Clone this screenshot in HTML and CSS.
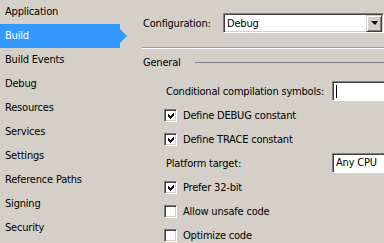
FILE: index.html
```html
<!DOCTYPE html>
<html lang="en">
<head>
<meta charset="UTF-8">
<title>Project Properties</title>
<link rel="stylesheet" href="styles.css">
</head>
<body>

<div class="page">
    <ul class="tabs">
        <li>Application</li>
        <li class="active">Build</li>
        <li>Build Events</li>
        <li>Debug</li>
        <li>Resources</li>
        <li>Services</li>
        <li>Settings</li>
        <li>Reference Paths</li>
        <li>Signing</li>
        <li>Security</li>
    </ul>

    <div class="panel">
        <div class="config">
            <span class="config-label">Configuration:</span>
            <div class="combo">
                <span class="combo-text">Debug</span>
                <span class="combo-btn"><span class="arrow-down"></span></span>
            </div>
        </div>

        <div class="separator"></div>

        <div class="group-title">
            <span>General</span>
            <span class="group-line"></span>
        </div>

        <div class="rows">
            <div class="row field">
                <span class="label">Conditional compilation symbols:</span>
                <div class="textbox"><span class="caret"></span></div>
            </div>
            <div class="row check">
                <span class="box checked"></span>
                <span>Define DEBUG constant</span>
            </div>
            <div class="row check">
                <span class="box checked"></span>
                <span>Define TRACE constant</span>
            </div>
            <div class="row field">
                <span class="label">Platform target:</span>
                <div class="textbox">Any CPU</div>
            </div>
            <div class="row check">
                <span class="box checked"></span>
                <span>Prefer 32-bit</span>
            </div>
            <div class="row check">
                <span class="box"></span>
                <span>Allow unsafe code</span>
            </div>
            <div class="row check">
                <span class="box"></span>
                <span>Optimize code</span>
            </div>
        </div>
    </div>
</div>

</body>
</html>
```

FILE: styles.css
```css
body {
    margin: 0;
    background: #d4d0c8;
    font-family: 'DejaVu Sans Condensed', 'DejaVu Sans', sans-serif;
    font-size: 11px;
    letter-spacing: -0.2px;
    color: #000;
    overflow: hidden;
}
.page {
    display: flex;
    height: 243px;
}
.tabs {
    list-style: none;
    margin: 0;
    padding: 0;
    width: 128px;
    flex-shrink: 0;
}
.tabs li {
    position: relative;
    height: 24px;
    line-height: 24px;
    padding-left: 5px;
    width: 115px;
}
.tabs li.active {
    background: #3399ff;
    color: #fff;
}
.tabs li.active::after {
    content: "";
    position: absolute;
    left: 120px;
    top: 5px;
    border-left: 7px solid #3399ff;
    border-top: 7px solid transparent;
    border-bottom: 7px solid transparent;
}
.panel {
    flex: 1;
    min-width: 0;
}
.config {
    display: flex;
    align-items: center;
    height: 20px;
    margin-top: 13px;
    padding-left: 15px;
}
.config-label {
    width: 80px;
}
.combo {
    display: flex;
    align-items: center;
    width: 154px;
    height: 16px;
    background: #fff;
    border: 1px solid;
    border-color: #808080 #fff #fff #808080;
    box-shadow: inset 1px 1px #404040, inset -1px -1px #d4d0c8;
    padding: 1px 2px 1px 3px;
}
.combo-text {
    flex: 1;
}
.combo-btn {
    display: flex;
    align-items: center;
    justify-content: center;
    background: #d4d0c8;
    border: 1px solid;
    border-color: #d4d0c8 #404040 #404040 #d4d0c8;
    box-shadow: inset 1px 1px #fff, inset -1px -1px #808080;
    box-sizing: border-box;
    width: 16px;
    height: 17px;
    margin-right: -1px;
}
.arrow-down {
    border-top: 4px solid #000;
    border-left: 4px solid transparent;
    border-right: 3px solid transparent;
}
.separator {
    margin: 14px 0 0 14px;
    border-top: 1px solid #a0a0a0;
    border-bottom: 1px solid #fff;
}
.group-title {
    display: flex;
    align-items: center;
    height: 24px;
    margin-top: 1px;
    padding-left: 15px;
}
.group-line {
    flex: 1;
    margin-left: 14px;
    border-top: 1px solid #808080;
}
.rows {
    margin-top: 5px;
    padding-left: 36px;
}
.row {
    display: flex;
    align-items: center;
    height: 24px;
}
.field .label {
    width: 166px;
    padding-left: 2px;
}
.textbox {
    flex: 1;
    height: 16px;
    line-height: 16px;
    background: #fff;
    border: 1px solid;
    border-color: #808080 #fff #fff #808080;
    border-right: none;
    box-shadow: inset 1px 1px #404040;
    padding: 1px 0 1px 3px;
}
.caret {
    display: inline-block;
    width: 1px;
    height: 13px;
    margin-top: 2px;
    background: #000;
    vertical-align: top;
}
.check .box {
    width: 11px;
    height: 11px;
    margin-right: 6px;
    background: #fff;
    border: 1px solid;
    border-color: #808080 #fff #fff #808080;
    box-shadow: inset 1px 1px #404040, inset -1px -1px #d4d0c8;
    flex-shrink: 0;
}
.check .box.checked {
    background: #fff url("data:image/svg+xml,%3Csvg xmlns='http://www.w3.org/2000/svg' width='11' height='11'%3E%3Cpath d='M3 4h1v1h1v1h1v-1h1v-1h1v-1h1v3h-1v1h-1v1h-1v1h-1v-1h-1v-1h-1z' fill='%23000'/%3E%3C/svg%3E") no-repeat;
}
```
